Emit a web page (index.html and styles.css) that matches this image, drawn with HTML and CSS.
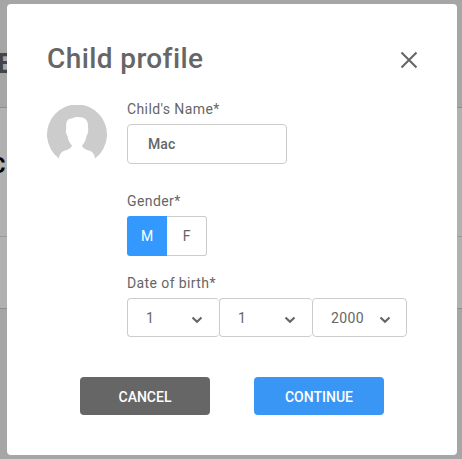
FILE: index.html
```
<!DOCTYPE html>
<html lang="en">
<head>
    <meta charset="UTF-8">
    <meta name="viewport" content="width=device-width, initial-scale=1.0">
    <title>Child profile</title>
    <link rel="stylesheet" href="styles.css">
</head>
<body>
    <div class="page">
        <div class="page-header"><span>E</span></div>
        <div class="page-row first"><span>C</span></div>
        <div class="page-row second"></div>
    </div>

    <form class="modal">
        <div class="modal-header">
            <h1>Child profile</h1>
            <button type="button" class="close" aria-label="Close">
                <svg width="18" height="18" viewBox="0 0 18 18"><path d="M1.5 1.5L16.5 16.5M16.5 1.5L1.5 16.5" fill="none" stroke="#666" stroke-width="2.1"/></svg>
            </button>
        </div>

        <div class="modal-body">
            <svg class="avatar" width="60" height="60" viewBox="0 0 60 60">
                <path fill="#ccc" d="M12 53.5A30 30 0 1 1 48 53.5C47.5 49 46 47 42 45.5C38.5 44.5 36 43.5 35 40.5C37.5 38 39 35 39.5 31C41 29 41.5 26 41 22C41.5 15.5 38.5 12 31 12C28 12 26.5 12.5 25 13.5C20.5 13.5 18.5 17 19.3 23C18.5 26 19 29 20.5 31C21 35 22.5 38 25 40.5C24 43.5 21.5 44.5 18 45.5C14 47 12.5 49 12 53.5Z"/>
            </svg>

            <div class="fields">
                <label for="name">Child's Name*</label>
                <input type="text" id="name" name="name" value="Mac">

                <label>Gender*</label>
                <div class="gender">
                    <button type="button" class="active">M</button>
                    <button type="button">F</button>
                </div>

                <label>Date of birth*</label>
                <div class="birth">
                    <div class="select month">
                        <span>1</span>
                        <svg width="12" height="8" viewBox="0 0 12 8"><path d="M1.5 1.5L6 5.8L10.5 1.5" fill="none" stroke="#666" stroke-width="2.2"/></svg>
                    </div>
                    <div class="select">
                        <span>1</span>
                        <svg width="12" height="8" viewBox="0 0 12 8"><path d="M1.5 1.5L6 5.8L10.5 1.5" fill="none" stroke="#666" stroke-width="2.2"/></svg>
                    </div>
                    <div class="select year">
                        <span>2000</span>
                        <svg width="12" height="8" viewBox="0 0 12 8"><path d="M1.5 1.5L6 5.8L10.5 1.5" fill="none" stroke="#666" stroke-width="2.2"/></svg>
                    </div>
                </div>
            </div>
        </div>

        <div class="actions">
            <button type="button" class="cancel">CANCEL</button>
            <button type="button" class="continue">CONTINUE</button>
        </div>
    </form>
</body>
</html>
```
FILE: styles.css
```
* {
    box-sizing: border-box;
}

body {
    margin: 0;
    height: 459px;
    overflow: hidden;
    background-color: #a6a6a6;
    font-family: Roboto, "Liberation Sans", sans-serif;
    color: #666;
}

/* page under the dialog */
.page-header {
    display: flex;
    height: 107px;
    padding-top: 48px;
    font-size: 28px;
    line-height: 32px;
    font-weight: 700;
    color: #444;
}

.page-header span {
    margin-left: -3px;
}

.page-row {
    display: flex;
    background-color: #b1b1b1;
    border-top: 1px solid #8e8e8e;
}

.page-row.first {
    height: 129px;
    padding-top: 45px;
    font-size: 22px;
    line-height: 26px;
    font-weight: 700;
    color: #000;
}

.page-row.first span {
    margin-left: -9px;
}

.page-row.second {
    height: 73px;
    border-top-color: #999;
    border-bottom: 1px solid #8e8e8e;
}

.modal {
    position: absolute;
    top: 4px;
    left: 7px;
    width: 450px;
    height: 451px;
    padding: 35px 39px 0 40px;
    background-color: #fff;
    border-radius: 4px;
}

.modal-header {
    display: flex;
    justify-content: space-between;
    align-items: center;
    height: 38px;
}

h1 {
    margin: 0;
    font-size: 28px;
    font-weight: 500;
    letter-spacing: 0.4px;
}

button {
    padding: 0;
    border: none;
    background: none;
    font-family: inherit;
    cursor: pointer;
}

.close {
    width: 18px;
    height: 18px;
    margin-top: 3px;
}

.close svg {
    display: block;
}

.modal-body {
    display: flex;
    gap: 20px;
    padding-top: 23px;
}

.avatar {
    flex: none;
    margin-top: 5px;
}

.fields {
    width: 280px;
}

label {
    display: block;
    height: 24px;
    line-height: 18px;
    font-size: 14px;
    letter-spacing: 0.4px;
}

input {
    display: block;
    width: 160px;
    height: 40px;
    margin-bottom: 28px;
    padding: 0 20px;
    border: 1px solid #ccc;
    border-radius: 4px;
    font-family: inherit;
    font-size: 14px;
    font-weight: 500;
    letter-spacing: 0.1px;
    color: #666;
}

.gender {
    display: flex;
    width: 80px;
    height: 40px;
    margin-bottom: 18px;
}

.gender button {
    width: 40px;
    border: 1px solid #ccc;
    border-left: none;
    border-radius: 0 3px 3px 0;
    font-size: 14px;
    color: #666;
}

.gender .active {
    border: none;
    border-radius: 3px 0 0 3px;
    background-color: #39f;
    color: #fff;
}

.birth {
    display: flex;
}

.select {
    display: flex;
    justify-content: space-between;
    align-items: center;
    width: 93px;
    height: 39px;
    padding: 0 16px 0 18px;
    border: 1px solid #ccc;
    border-right: none;
    border-radius: 4px;
    font-size: 14px;
    letter-spacing: 0.4px;
}

.select svg {
    margin-top: 5px;
}

.select.month {
    width: 92px;
}

.select.year {
    width: 95px;
    padding-right: 15px;
    border-right: 1px solid #ccc;
}

.actions {
    display: flex;
    gap: 44px;
    padding: 40px 0 0 33px;
}

.actions button {
    flex: none;
    width: 130px;
    height: 38px;
    padding-top: 2px;
    border-radius: 4px;
    font-size: 14px;
    font-weight: 500;
    color: #fff;
}

.cancel {
    background-color: #666;
}

.continue {
    background-color: #3a96f5;
}
```
